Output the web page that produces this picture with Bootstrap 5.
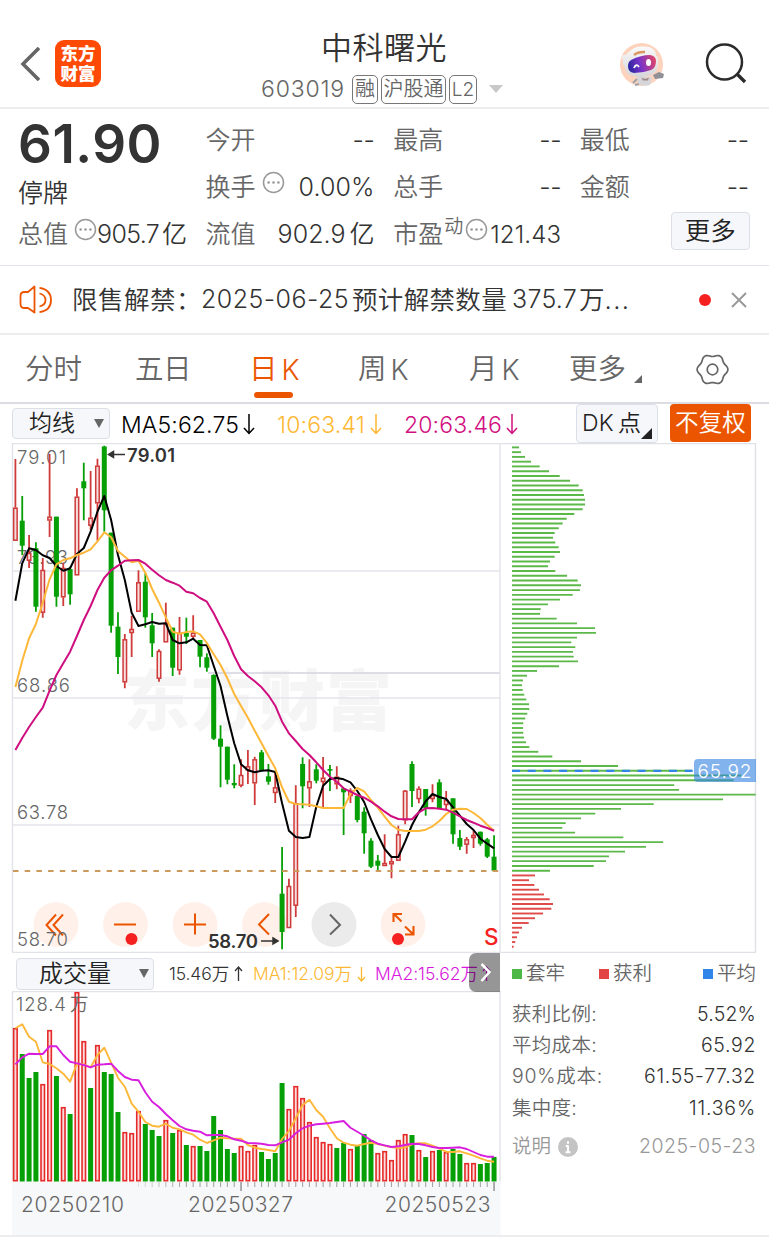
<!DOCTYPE html>
<html lang="zh-CN">
<head>
<meta charset="utf-8">
<meta name="viewport" content="width=device-width, initial-scale=1">
<title>中科曙光 603019</title>
<link href="https://cdn.jsdelivr.net/npm/bootstrap@5.3.0/dist/css/bootstrap.min.css" rel="stylesheet">
<script src="https://cdn.jsdelivr.net/npm/bootstrap@5.3.0/dist/js/bootstrap.bundle.min.js"></script>
<style>
  body{font-family:Inter,"Noto Sans CJK SC",sans-serif;color:#333;background:#fff;width:769px;height:1254px;overflow:hidden;font-weight:350;line-height:1}
  svg{display:block;flex:none}
  svg text{font-family:Inter,"Noto Sans CJK SC",sans-serif}
  [data-w]{display:inline-block;white-space:nowrap;flex:none}
  .zh{font-weight:350}
  .topbar{height:109px;border-bottom:2px solid #ededef}
  .brand-tile{width:46px;height:47px;border-radius:9px;background:#ff4a05;color:#fff;font-size:17.5px;font-weight:900;line-height:20px;margin-left:14px}
  .stock-name{font-size:31px;color:#333;font-weight:350;line-height:36px}
  .code{font-size:23px;color:#666;line-height:26px}
  .tagbox{height:29px;border:1.5px solid #777;border-radius:5px;color:#666;font-size:20px}
  .quote{height:157px;border-bottom:1px solid #e2e3ea;padding:8px 18px 0}
  .quote-grid{display:grid;grid-template-columns:169px 169px 168px 169px;column-gap:18.6px;grid-template-rows:47px 47px 47px;font-size:25px}
  .quote-grid>div{height:47px}
  .key{color:#666;white-space:nowrap}
  .val{color:#333}
  .price{font-size:53px;font-weight:600;color:#333}
  .more-btn{width:79px;height:38px;border:1.5px solid #dcdfe8;border-radius:4px;background:#f6f7fa;color:#222;font-size:25.5px}
  .notice{height:69px;border-bottom:2px solid #ededef;font-size:25.5px;padding:0 21px 0 19px}
  .reddot{width:12px;height:12px;background:#f52020}
  .periods{height:69px;border-bottom:2px solid #dcdde3;font-size:28.5px;color:#666;position:relative}
  .periods>div{height:67px;padding-top:2px}
  .active-tab{color:#ec5500;position:relative}
  .active-tab::after{content:"";position:absolute;left:5px;bottom:4px;width:39px;height:6px;border-radius:3px;background:#ec5500}
  .latin-k{font-size:28px}
  .indic{height:39px;padding-left:12px;font-size:23px}
  .pick{border:1.5px solid #dcdfe8;border-radius:4px;background:#f6f7fa;color:#222}
  .adj{width:81px;height:38px;border-radius:4px;background:#ec5500;color:#fff;font-size:23.5px}
  .volhead{height:38px;font-size:17.5px;position:relative}
  .expander{position:absolute;left:469px;top:0;width:31px;height:39px;background:rgba(0,0,0,.41);border-radius:7px 0 0 7px}
  .chips{width:244px;font-size:19.5px;margin-left:11px;color:#666}
  .sq{width:10px;height:10px}
  .chips .line{height:31.3px}
</style>
</head>
<body>

<header class="topbar d-flex align-items-start">
  <div class="d-flex align-items-center" style="width:261px;height:127px;padding-left:20px">
    <svg width="21" height="34" viewBox="0 0 21 34" fill="none" stroke="#666" stroke-width="3.600"><path d="M19 1 3 17 19 33"/></svg>
    <div class="brand-tile d-flex flex-column align-items-center justify-content-center"><span>东方</span><span>财富</span></div>
  </div>
  <div class="d-flex flex-column" style="width:359px;padding-top:30px">
    <div class="stock-name" style="padding-left:60px"><span data-w="126">中科曙光</span></div>
    <div class="d-flex align-items-center" style="margin-top:8px;height:30px">
      <span class="code" data-w="84">603019</span>
      <span class="tagbox zh d-flex align-items-center justify-content-center" style="width:26px;margin-left:7px">融</span>
      <span class="tagbox zh d-flex align-items-center justify-content-center" style="width:65px;margin-left:3px">沪股通</span>
      <span class="tagbox d-flex align-items-center justify-content-center" style="width:28px;margin-left:3px;font-size:19px">L2</span>
      <svg width="14" height="8" style="margin-left:12px"><path d="M0 0H14L7 8Z" fill="#c8c8c8"/></svg>
    </div>
  </div>
  <svg width="46" height="46" viewBox="0 0 46 46" style="margin-top:42px">
    <defs>
      <linearGradient id="visor" x1="0" y1=".6" x2="1" y2=".4"><stop offset="0" stop-color="#2b23a0"/><stop offset=".45" stop-color="#7a35c8"/><stop offset="1" stop-color="#e0446a"/></linearGradient>
      <linearGradient id="shell" x1="0" y1="0" x2="0" y2="1"><stop offset="0" stop-color="#fafafa"/><stop offset="1" stop-color="#d6d6da"/></linearGradient>
    </defs>
    <circle cx="21.500" cy="22.500" r="21.500" fill="#fdd3bd"/>
    <path d="M17 35h15l-2 8q-6 2-12-1z" fill="#d5d5da"/><path d="M17 37l-4 4M19 42l-4 1" stroke="#a0a0a5" stroke-width="2"/>
    <path d="M33 33l6-3 5 2-1 4-8 1z" fill="#909096"/>
    <path d="M21 35.500q4 2.500 8 0l-1 3h-5z" fill="#a08888"/>
    <path d="M2 16q0-4 4-3Q13 4 22 4.500 36 4 36 14q3 0 2 7 0 8-5 11-10 5-19 2Q6 33 5 26q-4-6-1-8-3 0-2-2z" fill="url(#shell)"/>
    <path d="M14 13q4-3.500 11-3" stroke="#dc9860" stroke-width="2.500" fill="none"/>
    <path d="M11 18q10-5 19-5 6 1 6 6 0 7-5 9-8 3-17 3-6-1-6-7 0-4 3-6z" fill="url(#visor)"/>
    <path d="M14 26q2-5 5-1" stroke="#fff" stroke-width="1.800" fill="none"/><ellipse cx="28.500" cy="20.500" rx="2.500" ry="3.500" fill="#fff"/>
  </svg>
  <svg width="42" height="42" viewBox="0 0 42 42" fill="none" stroke="#2b2b2b" stroke-width="2.500" style="margin:43px 0 0 39px"><circle cx="19.500" cy="19" r="17.500"/><path d="M32 31l8 8" stroke-width="3.300"/></svg>
</header>

<section class="quote">
  <div class="quote-grid">
    <div style="grid-row:span 2;height:94px">
      <div class="price" style="line-height:54px"><span data-w="144">61.90</span></div>
      <div style="margin-top:10px" class="zh">停牌</div>
    </div>
    <div class="d-flex align-items-center justify-content-between"><span class="key">今开</span><span class="val" data-w="22">--</span></div>
    <div class="d-flex align-items-center justify-content-between"><span class="key">最高</span><span class="val" data-w="22">--</span></div>
    <div class="d-flex align-items-center justify-content-between"><span class="key">最低</span><span class="val" data-w="22">--</span></div>
    <div class="d-flex align-items-center"><span class="key">换手</span>
      <svg width="23" height="23" viewBox="0 0 23 23" style="margin:-10px 0 0 6px"><circle cx="11.500" cy="11.500" r="10" fill="none" stroke="#999" stroke-width="1.500"/><path d="M5.500 11.500h2.200m2.700 0h2.200m2.700 0h2.200" stroke="#888" stroke-width="2"/></svg>
      <span class="val ms-auto" data-w="76">0.00%</span></div>
    <div class="d-flex align-items-center justify-content-between"><span class="key">总手</span><span class="val" data-w="22">--</span></div>
    <div class="d-flex align-items-center justify-content-between"><span class="key">金额</span><span class="val" data-w="22">--</span></div>
    <div class="d-flex align-items-center"><span class="key">总值</span>
      <svg width="23" height="23" viewBox="0 0 23 23" style="margin:-10px 0 0 6px"><circle cx="11.500" cy="11.500" r="10" fill="none" stroke="#999" stroke-width="1.500"/><path d="M5.500 11.500h2.200m2.700 0h2.200m2.700 0h2.200" stroke="#888" stroke-width="2"/></svg>
      <span class="val ms-auto d-flex align-items-center"><span data-w="62">905.7</span><span class="zh" style="margin-left:3px">亿</span></span></div>
    <div class="d-flex align-items-center justify-content-between"><span class="key">流值</span><span class="val d-flex align-items-center"><span data-w="68">902.9</span><span class="zh ms-1">亿</span></span></div>
    <div class="d-flex align-items-center"><span class="key">市盈</span><span class="key" style="font-size:19px;margin:-16px 0 0 1px">动</span>
      <svg width="23" height="23" viewBox="0 0 23 23" style="margin:-10px 0 0 2px"><circle cx="11.500" cy="11.500" r="10" fill="none" stroke="#999" stroke-width="1.500"/><path d="M5.500 11.500h2.200m2.700 0h2.200m2.700 0h2.200" stroke="#888" stroke-width="2"/></svg>
      <span class="val ms-auto" data-w="71" style="font-size:24px">121.43</span></div>
    <div class="d-flex align-items-center justify-content-end"><div class="more-btn zh d-flex align-items-center justify-content-center" style="margin:-7px -1px 0 0">更多</div></div>
  </div>
</section>

<section class="notice d-flex align-items-center">
  <svg width="34" height="30" viewBox="0 0 34 30" fill="none" stroke="#ec5500" stroke-width="1.800" stroke-linejoin="round"><path d="M5.500 7H9l6.500-5.500v26L9 23H5.500Q1.500 23 1.500 19V11Q1.500 7 5.500 7z"/><path d="M20.500 2.800Q32 4.500 32 15T20.500 27.200M20.500 8.500Q26.500 10 26.500 15T20.500 21.500"/></svg>
  <span class="zh" data-w="104" style="margin-left:19px">限售解禁</span><span class="zh" style="width:25px">：</span>
  <span data-w="148" style="font-size:25px">2025-06-25</span><span class="zh" data-w="155" style="margin-left:3px">预计解禁数量</span><span data-w="65" style="margin-left:5px;font-size:25px">375.7</span><span class="zh" style="margin-left:2px">万</span><span data-w="26">...</span>
  <span class="reddot rounded-circle ms-auto"></span>
  <svg width="16" height="16" viewBox="0 0 16 16" stroke="#999" stroke-width="2" style="margin:0 1px 0 20px"><path d="M1 1l14 14M15 1 1 15"/></svg>
</section>

<nav class="periods d-flex">
  <div class="d-flex align-items-center" style="width:109px;padding-left:25px">分时</div>
  <div class="d-flex align-items-center" style="width:140px;padding-left:26px"><span data-w="56">五日</span></div>
  <div class="active-tab d-flex align-items-center" style="width:109px">日<span class="latin-k ms-1">K</span></div>
  <div class="d-flex align-items-center" style="width:111px">周<span class="latin-k ms-1">K</span></div>
  <div class="d-flex align-items-center" style="width:100px">月<span class="latin-k ms-1">K</span></div>
  <div class="d-flex align-items-center">更多<svg width="8" height="8" style="margin:19px 0 0 8px"><path d="M8 0V8H0z" fill="#666"/></svg></div>
  <div class="d-flex align-items-center ms-auto" style="padding-right:40px"><svg width="33" height="33" viewBox="-16.500 -16.500 33 33" fill="none" stroke="#666" stroke-width="1.700"><path id="gear"/><circle r="5.300"/></svg></div>
</nav>

<section class="indic d-flex align-items-center">
  <div class="pick zh d-flex align-items-center" style="width:98px;height:31px;padding-left:16px">均线<svg width="10" height="9" class="ms-auto" style="margin-right:5px"><path d="M0 0H10L5 9z" fill="#666"/></svg></div>
  <span class="text-black pt-1" data-w="118" style="margin-left:11px">MA5:62.75</span>
  <svg width="12" height="22" viewBox="0 0 12 22" fill="none" stroke="#000" stroke-width="1.500" style="margin-left:4px"><path d="M6 1v19M1 15l5 5.500 5-5.500"/></svg>
  <span class="pt-1" data-w="88" style="margin-left:22px;color:#fdb833">10:63.41</span>
  <svg width="12" height="22" viewBox="0 0 12 22" fill="none" stroke="#fdb833" stroke-width="1.500" style="margin-left:5px"><path d="M6 1v19M1 15l5 5.500 5-5.500"/></svg>
  <span class="pt-1" data-w="98" style="margin-left:22px;color:#d1107f">20:63.46</span>
  <svg width="12" height="22" viewBox="0 0 12 22" fill="none" stroke="#d1107f" stroke-width="1.500" style="margin-left:4px"><path d="M6 1v19M1 15l5 5.500 5-5.500"/></svg>
  <div class="pick d-flex align-items-center ms-auto" style="width:82px;height:39px;padding-left:5px"><span data-w="32">DK</span><span class="zh ms-1">点</span><svg width="11" height="11" style="margin:19px 0 0 0"><path d="M11 0V11H0z" fill="#222"/></svg></div>
  <div class="adj zh d-flex align-items-center justify-content-center" style="margin:-1px 18px 0 12px"><span data-w="71">不复权</span></div>
</section>

<main class="d-flex" style="height:792px">
  <div style="width:501px">
    <svg id="kchart" width="501" height="510" viewBox="0 443 501 510"></svg>
    <div class="volhead d-flex align-items-center" style="padding:3px 0 0 16px">
      <div class="pick zh d-flex align-items-center" style="width:138px;height:32px;padding-left:22px;font-size:24px">成交量<svg width="10" height="9" class="ms-auto" style="margin-right:4px"><path d="M0 0H10L5 9z" fill="#666"/></svg></div>
      <span data-w="60" style="margin-left:15px">15.46<span class="zh">万</span></span>
      <svg width="9" height="16" viewBox="0 0 9 16" fill="none" stroke="#333" stroke-width="1.300" style="margin-left:5px"><path d="M4.500 15V1.500M1 5l3.500-4L8 5"/></svg>
      <span data-w="99" style="margin-left:10px;color:#fdb833">MA1:12.09<span class="zh">万</span></span>
      <svg width="9" height="16" viewBox="0 0 9 16" fill="none" stroke="#fdb833" stroke-width="1.300" style="margin-left:5px"><path d="M4.500 1v13.500M1 11l3.500 4L8 11"/></svg>
      <span data-w="103" style="margin-left:9px;color:#d818dc">MA2:15.62<span class="zh">万</span></span>
      <svg width="9" height="16" viewBox="0 0 9 16" fill="none" stroke="#d818dc" stroke-width="1.300" style="margin-left:4px"><path d="M4.500 15V1.500M1 5l3.500-4L8 5"/></svg>
      <div class="expander"><svg width="31" height="39" fill="none" stroke="#fff" stroke-width="2.500"><path d="M12.500 11l8 8-8 9"/></svg></div>
    </div>
    <svg id="vchart" width="501" height="244" viewBox="0 991 501 244"></svg>
  </div>
  <div>
    <svg id="profile" width="260" height="510" viewBox="501 443 260 510"></svg>
    <div class="chips">
      <div class="d-flex align-items-center zh" style="height:42px;font-size:19.500px">
        <span class="sq me-1" style="background:#4db848"></span>套牢
        <span class="sq me-1" style="background:#e34545;margin-left:34px"></span>获利
        <span class="sq me-1 ms-auto" style="background:#2f86e8"></span>平均
      </div>
      <div style="padding-top:4px">
        <div class="line d-flex align-items-center justify-content-between"><span class="zh" data-w="85">获利比例:</span><span class="val" data-w="59">5.52%</span></div>
        <div class="line d-flex align-items-center justify-content-between"><span class="zh" data-w="85">平均成本:</span><span class="val" data-w="55">65.92</span></div>
        <div class="line d-flex align-items-center justify-content-between"><span class="zh" data-w="91">90%成本:</span><span class="val" data-w="112">61.55-77.32</span></div>
        <div class="line d-flex align-items-center justify-content-between"><span class="zh" data-w="65">集中度:</span><span class="val" data-w="67">11.36%</span></div>
        <div class="d-flex align-items-center" style="height:46px;color:#999"><span class="zh">说明</span><svg width="20" height="20" viewBox="0 0 20 20" style="margin-left:7px"><circle cx="10" cy="10" r="10" fill="#c4c4c4"/><path d="M10 4.300v2.400M10 8.500v7M7.800 9H10M7.500 15.300h5" stroke="#fff" stroke-width="2"/></svg><span class="ms-auto" data-w="117">2025-05-23</span></div>
      </div>
    </div>
  </div>
</main>
<div style="height:2px;background:#ededef"></div>

<script>
const X = i => +(15.4 + i * 6.838).toFixed(2);
const GREEN = '#06a006', RED = '#cf3a3a';

// each candle: direction, high, body top, body bottom, low
const candles = `r 459 507.7 540.7 540.7|g 496 520.7 545.7 555|r 535 553 560.7 568|g 542.3 548.3 606.7 611.7|r 558 570 612.7 617.7|r 454 516.7 520.5 537|g 516.7 516.7 596.7 606.7|r 563 568 597.3 606|g 566.7 569 594.3 604.7|r 488.3 496.7 575.3 575.3|g 462.7 481.3 488.3 520.3|r 471 517.7 525.7 530|r 458.7 465.7 503.3 540.7|g 445.7 446.5 510.3 531.7|g 532.7 532.7 625.7 632.7|g 612.3 626.7 657 674|r 634 639.3 682.3 688.3|r 615.7 629 633 657|r 570.3 582.3 611.7 611.7|g 573.3 581.7 617.3 627.7|g 613 625.3 643.3 657|r 649.3 651 678.7 681.7|r 602.7 623 642.3 642.3|g 627.7 627.7 667.7 676|r 617 633 670.3 674.7|g 617.7 633 636.7 644|r 615.3 632.7 636.7 640|g 640 640 656.7 667.3|g 653.3 657.3 667.7 671.7|g 674.3 675 738.7 740|g 725.3 738.7 746.7 787.3|g 746.7 746.7 779.7 784.3|g 764.3 783 785.3 788.3|r 759.3 775 785.7 787.3|r 750 766.3 770.3 784|r 756.7 759.3 783.3 805|g 750 752.3 770.3 770.3|g 764 776.3 781.7 784.7|r 772 787.3 793 803|g 847 893.7 932 949.3|r 878.7 886 928 928|r 785.3 803.3 905.7 917|g 757.3 764 786.3 808.3|r 759.3 781.3 788.3 807|g 764.3 769.3 780.7 783.3|r 757 777.7 782 807.7|g 765 769 770.7 791|r 766.3 776.7 784.3 789.3|g 788.3 788.3 792.3 835|r 788.3 790.7 796 803|g 796 796 820 822.3|g 807.3 811.7 833.3 853.7|g 838.3 840.7 866.7 868|g 855 860.7 865.7 871|r 834.3 863 866 866|r 857.7 861.3 864.3 878.3|r 825.7 834.3 860.7 860.7|r 790 790.7 820.3 824.3|g 761.3 764 791 807|r 786.3 788.7 799 803.3|g 789 789 808.3 815.7|r 784.3 795 799 802.3|g 779.3 782.3 808.3 808.3|r 791 800 805 810|g 798.3 798.3 834.3 843.7|g 830 838 846.7 850|r 837 839.3 844.7 853.7|r 830.7 835 838 848|g 831.7 831.7 843.7 845.7|g 838 839.3 856.7 858|g 835.3 856.7 870.7 870.7`.split('|').map(s => s.split(' '));
const ma5 = [600.7,563.3,548.3,550,555.3,558,566,570.7,568.3,554,548,531.7,511.7,496,520,555,580,612.7,626,624.3,622,623.7,623.3,640,643.3,642.3,638.7,645,645.3,665.7,686,716,743.3,764.3,770.3,772.3,770.7,770.3,772,803.3,830.7,837,838,837,806.7,785.7,779,778,779.3,782.3,791,802,819.3,835,849,857,857,841.7,825,812.3,801.3,794,797,799,807.3,815.7,824,830,838.7,843.7,848.3];
const ma10 = [687,660.7,638.3,624,602.7,579.3,564.3,560,558.3,555,552.7,549.3,541.3,532.3,537.3,551,556.7,562.3,560.7,572.7,589,602.7,617.3,631.7,633.7,632,631.3,634.3,643,654.3,665,678.3,694,706,717.7,730.7,743.3,756,768.3,787.3,801.7,804,804.3,804.7,806.3,808,808,808,808,794,788,791.3,800,807.7,816.7,825,829.7,831,831,831,829.7,826.3,821,814,809.7,808.7,809,813,818,824.7,830.7];
const ma20 = [750,738,727,717,707.7,690.7,675,663.3,651.7,636,620,606,590,577.7,570.3,565.7,560.7,560.3,560,563.7,569.7,575.3,580,582.7,585.7,591.7,593.3,598,601.7,613.3,626.7,640,656,669.3,676,681.3,687.3,695.3,705.7,721.7,733.3,741,749,755,762.3,770,776.7,781.7,788.3,791.7,795,797.7,801.7,806.3,811.7,816.3,819,819.3,819.3,812.3,808.3,808,808.7,809.7,812.7,816.3,820,822.7,825.7,828,830.7];
const curve = (a, c, w) => `<polyline fill="none" stroke="${c}" stroke-width="${w}" stroke-linejoin="round" points="${a.map((y, i) => X(i) + ',' + y).join(' ')}"/>`;
const label = (x, y, w, t, extra = '') => `<text x="${x}" y="${y}" textLength="${w}" font-size="18.5" fill="#666" ${extra}>${t}</text>`;

let k = '';
k += `<text x="124" y="725" textLength="268" font-size="66" font-weight="900" fill="#f5f5f6">东方财富</text>`;
k += `<g stroke="#e3e4ec" stroke-width="1.500"><path d="M12 571H500M12 698H500M12 825H500"/><path d="M208 673H500" stroke="#d3d5de"/></g>`;
k += `<path d="M12.500 953V443.500H500V952.500H12.500" fill="none" stroke="#e2e3e8" stroke-width="1.400"/>`;
[56,125.5,195,264.5,334,403].forEach((x, i) => k += `<circle cx="${x}" cy="924.500" r="22.500" fill="${i === 4 ? '#ebebeb' : '#fff1ea'}"/>`);
k += `<g fill="none" stroke="#ec5500" stroke-width="2"><path d="M56 914.500 46.500 925 56 935.500M63 914.500 53.500 925 63 935.500M114 924.500h22M184 924.500h22M195 913.500v21M269 914 259 924.500 269 934.500"/><path d="M330 914.500 340 925 330 934.500" stroke="#666"/><path d="M393.500 922v-8h8.500M394 914l7.500 7.500M405 926.500l8 7.500M405 934.500h8.500V926" stroke-width="2.100"/></g>`;
k += label(17,463.5,49,'79.01') + label(17,563.5,51,'73.93') + label(17,691.5,53,'68.86') + label(17,818.5,51,'63.78') + label(17,946.3,51,'58.70');
candles.forEach(([d, h, t, b, l], i) => {
  const x = X(i), c = d === 'g' ? GREEN : RED;
  if (d === 'g') k += `<path d="M${x} ${h}V${l}" stroke="${c}" stroke-width="1.800"/><rect x="${x - 2.5}" y="${t}" width="5" height="${b - t}" fill="${c}"/>`;
  else k += `<path d="M${x} ${h}V${t}M${x} ${b}V${l}" stroke="${c}" stroke-width="1.800"/><rect x="${x - 1.75}" y="${+t + .5}" width="3.500" height="${Math.max(b - t - 1, 1)}" fill="#f7dede" stroke="${c}" stroke-width="1.500"/>`;
});
k += curve(ma5, '#000', 2) + curve(ma10, '#fdb83a', 2) + curve(ma20, '#cf0e80', 2);
k += `<path d="M13 871H500" stroke="#cc9a5c" stroke-width="1.800" stroke-dasharray="5.500 6.200"/>`;
k += `<path d="M109 454.500h16M113.500 451.500l-5 3 5 3zM261 941h15M273 938l5 3-5 3z" fill="#333" stroke="#333" stroke-width="1.500"/>`;
k += label(127,462,48,'79.01','style="font-weight:600;fill:#333"') + label(208,948,50,'58.70','style="font-weight:600;fill:#333"');
k += `<circle cx="131.500" cy="939" r="6" fill="#f52020"/><circle cx="398" cy="939" r="6" fill="#f52020"/>`;
k += `<text x="484" y="944.500" font-size="22.500" font-weight="500" fill="#f52020">S</text>`;
kchart.innerHTML = k;

const vol = 'r1028 g1054 g1078 g1072 r1084 r1030 g1076 r1107 g1114 r992 r1041 g1088 r1045 g1072 g1074 g1112 r1132 r1133 r1111 g1124 g1130 g1136 r1120 g1133 r1130 g1145 r1146 g1146 g1151 g1116 g1130 g1149 g1153 r1146 r1151 r1145 g1152 g1159 g1153 g1083 r1109 r1086 r1098 r1122 r1137 r1142 r1144 g1148 g1143 r1149 g1146 g1134 g1140 r1153 r1151 r1160 r1140 r1134 g1135 r1150 g1157 r1151 g1150 r1152 g1149 g1154 r1163 r1163 g1164 g1163 g1157'.split(' ');
const vm1 = [130,118,155,170,232,237,250,266,290,236,238,247,210,188,233,278,305,356,380,411,422,425,416,428,433,442,449,464,474,466,458,460,461,461,480,488,492,495,499,462,438,400,360,344,375,395,430,460,473,479,482,477,473,477,482,486,490,487,478,475,475,482,491,500,501,499,505,512,520,527,530];
const vm2 = [238,217,206,207,207,184,184,210,230,235,240,247,239,238,236,258,276,284,286,322,350,366,387,406,423,433,437,440,451,450,450,454,463,467,474,475,476,480,481,472,464,445,430,422,418,416,414,411,408,428,440,452,466,476,481,486,484,480,476,477,481,486,489,489,488,487,492,501,510,515,515];
let v = `<rect x="12" y="1181.500" width="488.500" height="53.500" fill="#f7f8fa"/><path d="M12.500 1181V991.500H500V1181" fill="none" stroke="#e2e3e8" stroke-width="1.400"/>`;
vol.forEach((s, i) => {
  const x = X(i), y = +s.slice(1);
  v += s[0] === 'g' ? `<rect x="${x - 2.5}" y="${y}" width="5" height="${1181.5 - y}" fill="#06a006"/>` : `<rect x="${x - 1.75}" y="${y + .7}" width="3.500" height="${1180 - y}" fill="#fbdcdc" stroke="#e62a2a" stroke-width="1.600"/>`;
  if (i > 17) v += `<path d="M${x} 1182v${i === 33 || i === 70 ? 9 : 5}" stroke="#a5a5a8" stroke-width="${i === 33 || i === 70 ? 1.8 : 1.1}" opacity="${Math.min(1, (i - 15) / 10)}"/>`;
});
v += label(16,1010.5,50,'128.4') + label(70,1010.5,17,'万','font-weight="350"');
v += curve(vm1.map(a => +(985 + a / 3).toFixed(1)), '#fdb83a', 1.9) + curve(vm2.map(a => +(985 + a / 3).toFixed(1)), '#d81ede', 1.9);
[[21,103,'20250210'],[188,105,'20250327'],[384.5,106,'20250523']].forEach(([x, w, t]) => v += `<text x="${x}" y="1212" textLength="${w}" font-size="21" fill="#666">${t}</text>`);
vchart.innerHTML = v;

// right ends of the cost-distribution bars, in thirds of a pixel
const dist = [57,63,75,93,119,147,179,210,236,248,252,255,255,248,223,200,188,176,164,159,166,176,180,164,150,144,166,201,233,243,240,218,180,144,122,120,170,231,285,288,231,214,226,219,221,234,177,111,81,69,66,68,73,79,87,88,82,76,70,69,70,72,78,88,115,157,243,354,576,724,701,523,537,767,669,461,363,286,243,197,187,225,370,489,438,375,327,318,281,150,105,87,103,117,132,149,159,154,129,105,86,66,57,51,46,41];
let p = `<path d="M501 443.500H755.500V952.500H501" fill="none" stroke="#e0e1e6" stroke-width="1.400"/>`;
dist.forEach((e, i) => {
  const y = (447.4 + i * 4.756).toFixed(2);
  p += `<path d="M512 ${y}H${(500 + e / 3).toFixed(1)}" stroke="${i > 89 ? '#e04a4a' : '#5cb949'}" stroke-width="1.900"/>`;
});
p += `<path d="M512 770.800H693" stroke="#2f86e8" stroke-width="2.200" stroke-dasharray="8 7.700"/>`;
p += `<path d="M756 759H698q-4 0-4 4v15q0 4 4 4h58z" fill="#2f80e0" fill-opacity=".6"/><text x="697.500" y="777.500" textLength="54" font-size="19" fill="#fff">65.92</text>`;
profile.innerHTML = p;

let g = '';
for (let a = 0; a < 360; a += 5) {
  const t = a * Math.PI / 180, r = 14.2 + 1.2 * Math.cos(6 * t);
  g += (a ? 'L' : 'M') + (r * Math.cos(t)).toFixed(2) + ' ' + (r * Math.sin(t)).toFixed(2);
}
gear.setAttribute('d', g + 'Z');

// spread each label's letters over its column width
document.querySelectorAll('[data-w]').forEach(el => {
  const s = (el.dataset.w - el.getBoundingClientRect().width) / el.textContent.length;
  el.style.letterSpacing = s.toFixed(3) + 'px';
});
</script>
</body>
</html>
